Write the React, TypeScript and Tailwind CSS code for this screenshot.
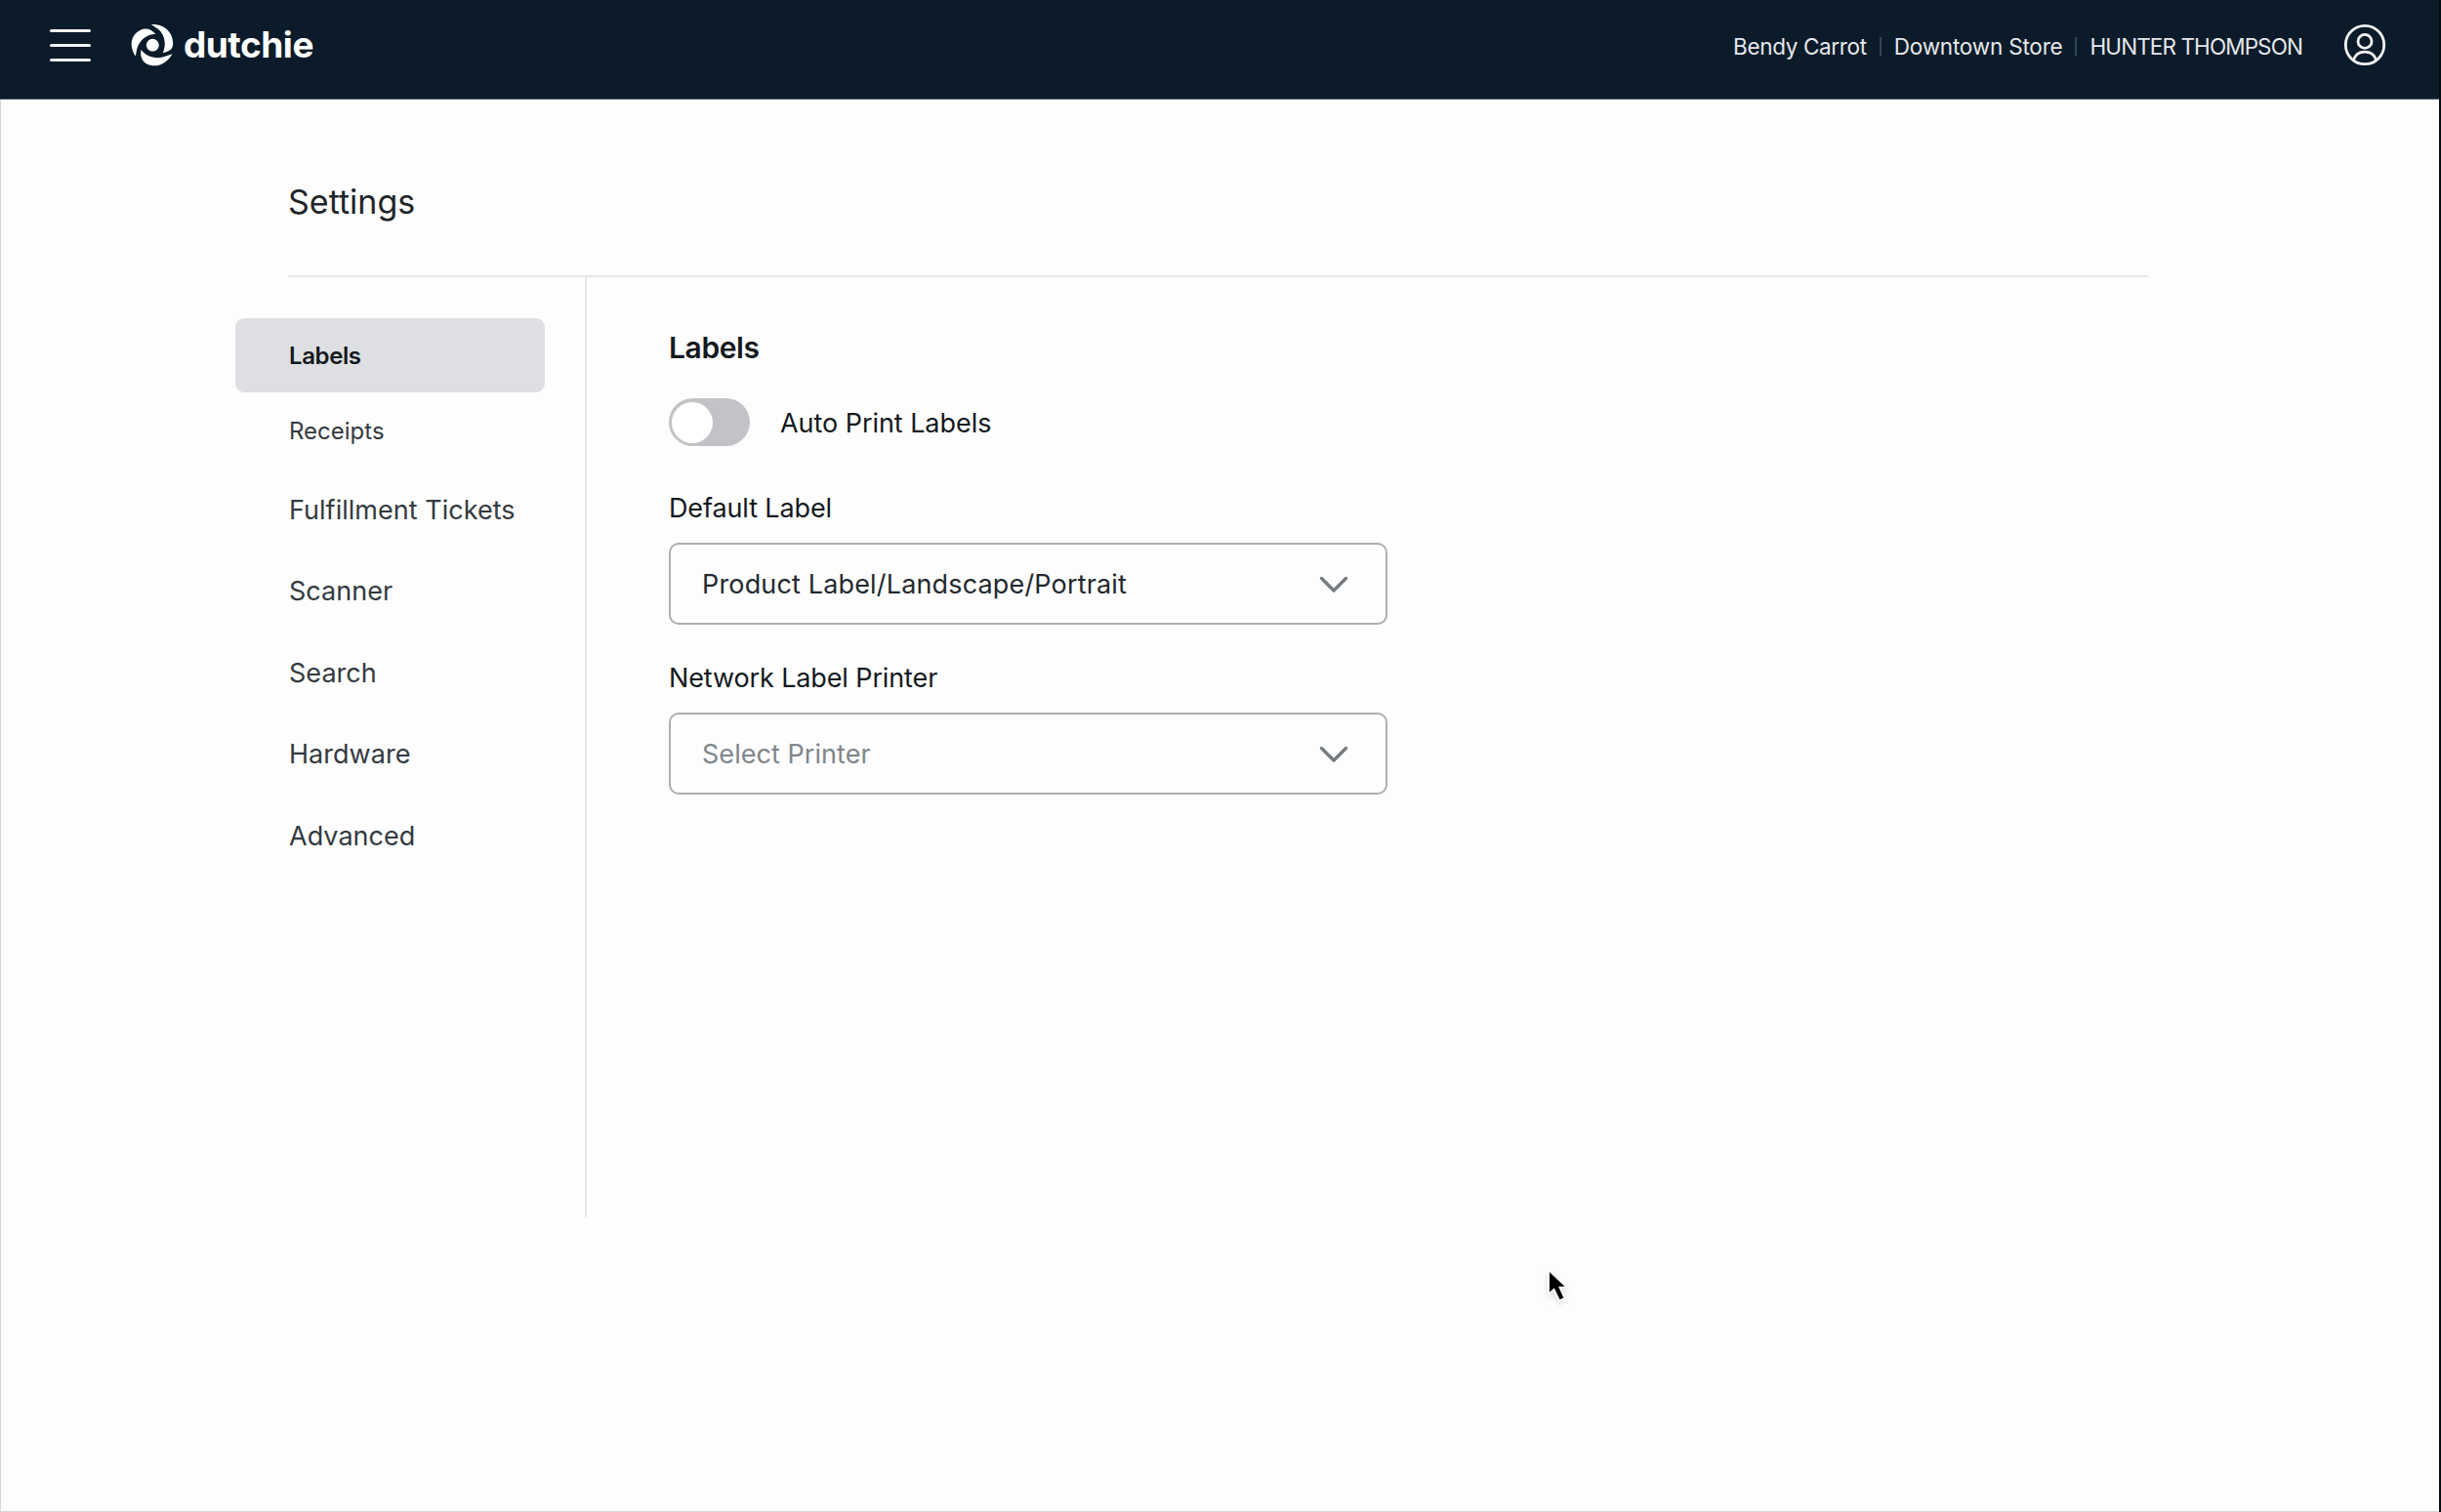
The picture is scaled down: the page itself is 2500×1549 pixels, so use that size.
const NAV_ITEMS = ['Fulfillment Tickets', 'Scanner', 'Search', 'Hardware', 'Advanced'];

function DutchieMark() {
  return (
    <svg className="size-[44px]" viewBox="0 0 44 44" fill="#ffffff">
      <circle cx="22.3" cy="22.2" r="6.4" />
      <path d="M21 1.2C33.5 0.2 43.2 9 43.2 20.5C43.2 25.4 40.3 29 32.8 29.9C36.5 22.5 35 12.5 29 6.8C27 4.6 23.5 3 21 1.2Z" />
      <path d="M4.7 33.6C-2.5 22.5 0.5 11.5 9.5 7C15 4 20.5 5.6 25.3 10.8C16 11.4 9.5 17 6.6 25C5.6 28 5.6 31 4.7 33.6Z" />
      <path d="M42.6 31.2C37 40.5 29.5 43.8 22.5 43.2C14 42.5 8.8 36.5 10.4 27C16 34 25 36.8 33.5 34.2C36.8 33.2 39.8 32.2 42.6 31.2Z" />
    </svg>
  );
}

function UserIcon() {
  return (
    <svg className="size-[44px]" viewBox="0 0 44 44" fill="none" stroke="#f1f3f5" strokeWidth="2.8">
      <circle cx="22" cy="22" r="19.7" />
      <circle cx="22" cy="18.4" r="7" />
      <path d="M10.5 37.5C12.2 32.2 16.6 29.2 22 29.2C27.4 29.2 31.8 32.2 33.5 37.5" />
    </svg>
  );
}

function Header() {
  return (
    <header className="flex h-[102px] items-start border-b border-[#4b5864] bg-[#0b1b2a] pt-6 pr-[54px] pl-[51px] text-[#e6e8ea]">
      <button className="mt-[6px] flex w-[42px] flex-col gap-3">
        <span className="h-[3px] rounded-full bg-[#f1f3f5]" />
        <span className="h-[3px] rounded-full bg-[#f1f3f5]" />
        <span className="h-[3px] rounded-full bg-[#f1f3f5]" />
      </button>
      <div className="ml-[41px] flex h-[44px] items-center">
        <DutchieMark />
        <span className="ml-[10px] text-[37px] leading-[44px] font-bold tracking-[-0.5px] text-white">dutchie</span>
      </div>
      <div className="ml-auto flex h-[44px] items-center text-[22.5px]">
        <span className="pt-[3px] tracking-[-0.35px]">Bendy Carrot</span>
        <span className="mx-[13px] mt-[3px] h-[19px] w-[2px] bg-[#33475c]" />
        <span className="pt-[3px] tracking-[-0.2px]">Downtown Store</span>
        <span className="mx-[13px] mt-[3px] h-[19px] w-[2px] bg-[#33475c]" />
        <span className="pt-[3px] tracking-[-0.9px]">HUNTER THOMPSON</span>
        <span className="ml-[42px]">
          <UserIcon />
        </span>
      </div>
    </header>
  );
}

function Sidebar() {
  return (
    <nav className="-ml-[54px] h-[963px] w-[360px] border-r-2 border-[#e4e6ea] pt-[42px] text-[27px] text-[#343a40]">
      <div className="flex h-[76px] w-[317px] items-center rounded-[9px] bg-[#dddfe2] pt-[2px] pl-[55px] text-[24px] font-semibold tracking-[-0.4px] text-[#14191d]">
        Labels
      </div>
      <div className="flex h-[78px] items-center pt-[2px] pl-[55px] text-[24px]">Receipts</div>
      {NAV_ITEMS.map((item) => (
        <div key={item} className="flex h-[83.5px] items-center pt-[2px] pl-[55px] tracking-[0.03px]">
          {item}
        </div>
      ))}
    </nav>
  );
}

function Select({ label, value, muted }: { label: string; value: string; muted?: boolean }) {
  return (
    <div className="h-[174px]">
      <div className="h-[71px] pt-[16px] leading-[40px] tracking-[-0.12px] text-[#14191d]">{label}</div>
      <div className="flex h-[84px] w-[736px] items-center justify-between rounded-[10px] border-2 border-[#abaeb4] pt-[2px] pr-[38px] pl-[32px]">
        <span className={muted ? 'tracking-[0.05px] text-[#7f868b]' : 'tracking-[0.16px] text-[#23292e]'}>{value}</span>
        <svg className="h-[18px] w-[30px]" viewBox="0 0 30 18" fill="none" stroke="#757b80" strokeWidth="3.4" strokeLinecap="round" strokeLinejoin="round">
          <path d="M2.5 2.5L15 15L27.5 2.5" />
        </svg>
      </div>
    </div>
  );
}

export default function App() {
  return (
    <div className="relative h-[1549px] w-[2500px] overflow-hidden border-r-2 border-[#050b12] bg-[#fdfdfd] font-['Inter',sans-serif]">
      <Header />
      <div className="h-[1447px] border-b border-l border-[#d6d7d9] pl-[294px]">
        <h1 className="h-[182px] w-[1905px] border-b-2 border-[#e2e4e8] pt-[83px] text-[34px] leading-[44px] text-[#1f2529]">
          Settings
        </h1>
        <div className="flex">
          <Sidebar />
          <main className="ml-[84px] text-[27px]">
            <h2 className="pt-[52px] text-[30px] leading-[40px] font-semibold tracking-[-0.4px] text-[#14191d]">Labels</h2>
            <div className="mt-[32px] flex h-[49px] items-center text-[#14191d]">
              <span className="flex h-[49px] w-[83px] items-center rounded-full bg-[#c2c3c6] pl-[3px]">
                <span className="size-[42px] rounded-full bg-white" />
              </span>
              <span className="ml-[31px] pt-[3px] tracking-[-0.05px]">Auto Print Labels</span>
            </div>
            <div className="mt-[28px]">
              <Select label="Default Label" value="Product Label/Landscape/Portrait" />
              <Select label="Network Label Printer" value="Select Printer" muted />
            </div>
          </main>
        </div>
      </div>
      <svg className="absolute top-[1297px] left-[1581px] h-[42px] w-[30px] drop-shadow-md" viewBox="0 0 30 42" fill="#000000" stroke="#ffffff" strokeWidth="1.8">
        <path d="M5 4V29L10.5 24L16 35.5L21.5 33L16.5 22H24Z" />
      </svg>
    </div>
  );
}
